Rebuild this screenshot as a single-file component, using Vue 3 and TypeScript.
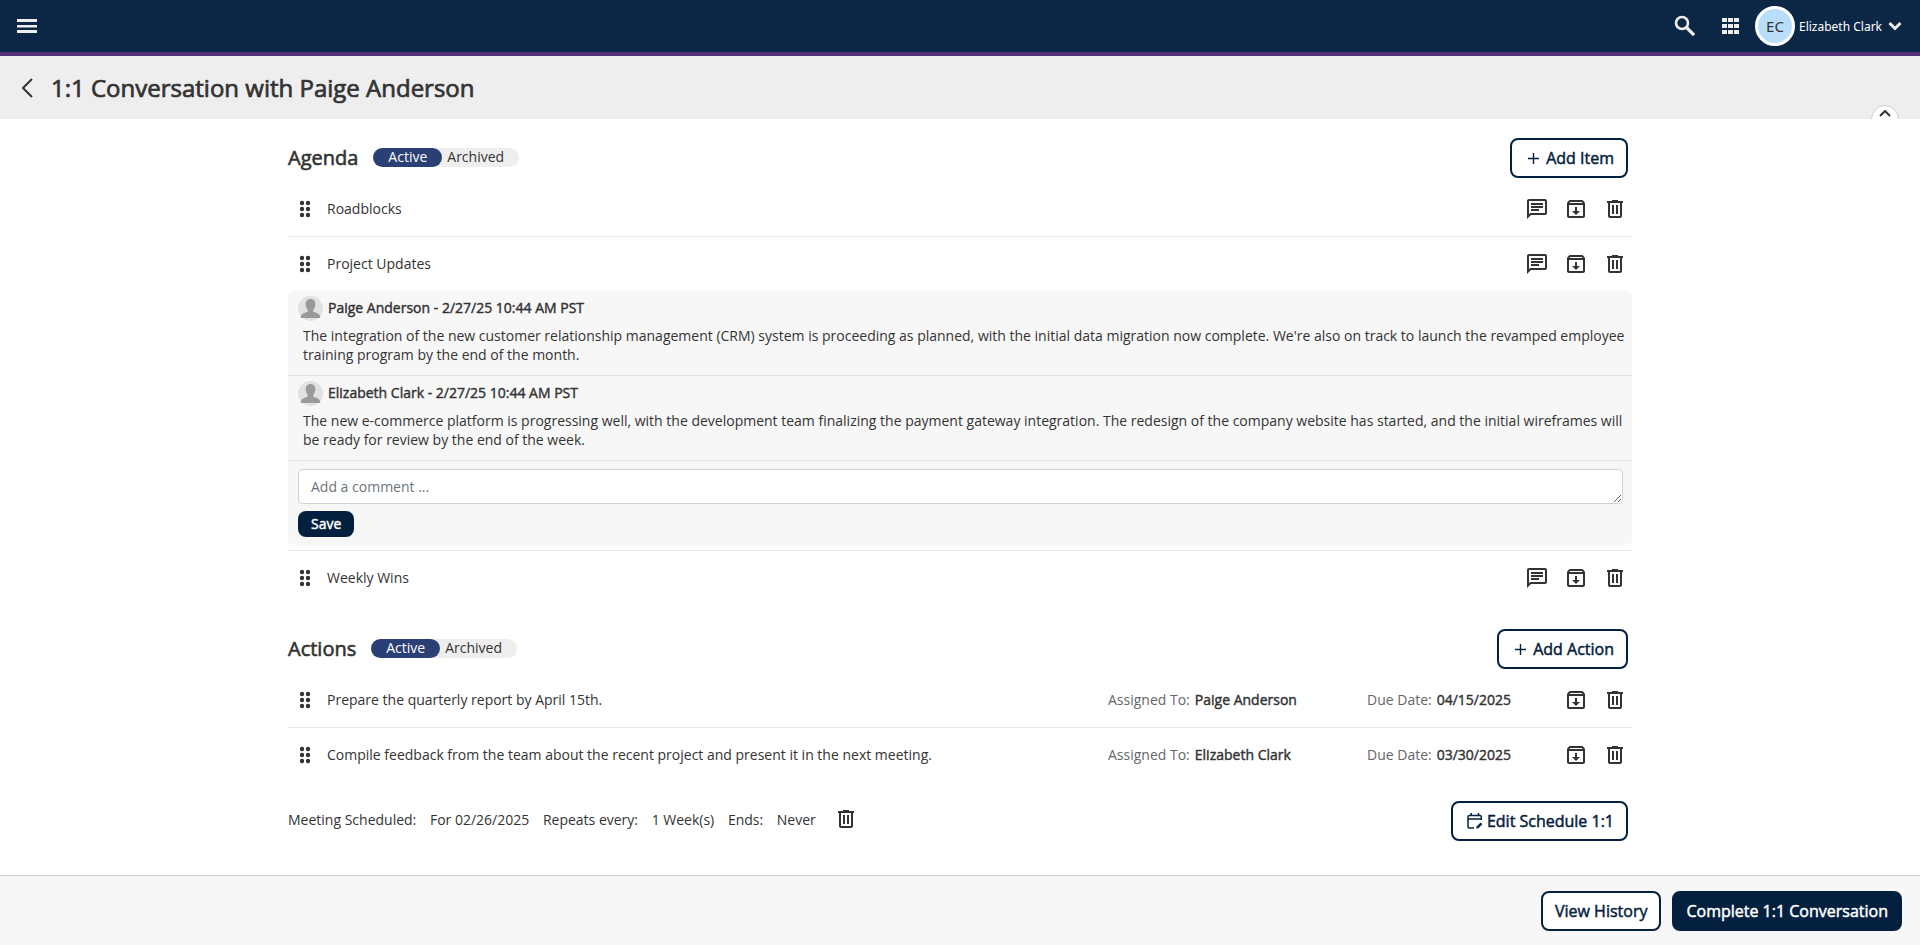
<script setup lang="ts">
import { ref } from 'vue'

interface AgendaComment {
  author: string
  stamp: string
  text: string
}
interface AgendaItem {
  title: string
  open: boolean
  comments: AgendaComment[]
}
interface ActionItem {
  title: string
  assignee: string
  due: string
}

const icons: Record<string, string> = {
  comment: 'M4 4h16v12H5.17L4 17.17V4m0-2c-1.1 0-1.99.9-1.99 2L2 22l4-4h14c1.1 0 2-.9 2-2V4c0-1.1-.9-2-2-2H4zm2 10h8v2H6v-2zm0-3h12v2H6V9zm0-3h12v2H6V6z',
  archive: 'M20.54 5.23l-1.39-1.68C18.88 3.21 18.47 3 18 3H6c-.47 0-.88.21-1.16.55L3.46 5.23C3.17 5.57 3 6.02 3 6.5V19c0 1.1.9 2 2 2h14c1.1 0 2-.9 2-2V6.5c0-.48-.17-.93-.46-1.27zM6.24 5h11.52l.83 1H5.42l.82-1zM5 19V8h14v11H5zm8-9h-2v4H8l4 4 4-4h-3v-4z',
  trash: 'M9 3v1H4v2h1v13c0 1.1.9 2 2 2h10c1.1 0 2-.9 2-2V6h1V4h-5V3H9zM7 6h10v13H7V6zm2 2v9h2V8H9zm4 0v9h2V8h-2z',
}

const agenda = ref<AgendaItem[]>([
  { title: 'Roadblocks', open: false, comments: [] },
  {
    title: 'Project Updates',
    open: true,
    comments: [
      {
        author: 'Paige Anderson',
        stamp: '2/27/25 10:44 AM PST',
        text: "The integration of the new customer relationship management (CRM) system is proceeding as planned, with the initial data migration now complete. We're also on track to launch the revamped employee training program by the end of the month.",
      },
      {
        author: 'Elizabeth Clark',
        stamp: '2/27/25 10:44 AM PST',
        text: 'The new e-commerce platform is progressing well, with the development team finalizing the payment gateway integration. The redesign of the company website has started, and the initial wireframes will be ready for review by the end of the week.',
      },
    ],
  },
  { title: 'Weekly Wins', open: false, comments: [] },
])

const actions: ActionItem[] = [
  { title: 'Prepare the quarterly report by April 15th.', assignee: 'Paige Anderson', due: '04/15/2025' },
  {
    title: 'Compile feedback from the team about the recent project and present it in the next meeting.',
    assignee: 'Elizabeth Clark',
    due: '03/30/2025',
  },
]

const agendaArchived = ref(false)
const actionsArchived = ref(false)
const draft = ref('')
</script>

<template>
  <div class="page">
    <header class="topbar">
      <button class="plain menu" aria-label="Menu">
        <svg width="22" height="16" viewBox="0 0 22 16"><path d="M1 1h20v3H1zM1 7h20v2.500H1zM1 12h20v3H1z" fill="#eee" /></svg>
      </button>
      <div class="top-right">
        <button class="plain search" aria-label="Search">
          <svg width="22" height="22" viewBox="0 0 22 22" fill="none" stroke="#eee">
            <circle cx="8" cy="8" r="6" stroke-width="2.6" /><path d="M12.5 12.5l7.6 7.6" stroke-width="3.2" />
          </svg>
        </button>
        <button class="plain apps" aria-label="Apps">
          <svg width="17" height="16" viewBox="0 0 17 16" fill="#eee">
            <path d="M0 0h5v4H0zM6 0h5v4H6zM12 0h5v4h-5zM0 6h5v4H0zM6 6h5v4H6zM12 6h5v4h-5zM0 12h5v4H0zM6 12h5v4H6zM12 12h5v4h-5z" />
          </svg>
        </button>
        <button class="plain account">
          <span class="initials">EC</span>
          <span class="user">Elizabeth Clark</span>
          <svg width="14" height="10" viewBox="0 0 14 10"><path d="M1.5 2l5.5 5.5L12.5 2" fill="none" stroke="#eee" stroke-width="3" /></svg>
        </button>
      </div>
    </header>

    <div class="titlebar">
      <a class="back" href="#" aria-label="Back">
        <svg width="12" height="20" viewBox="0 0 12 20"><path d="M11 1L2 10l9 9" fill="none" stroke="#333" stroke-width="2" /></svg>
      </a>
      <h1 class="strong">1:1 Conversation with Paige Anderson</h1>
      <button class="collapse" aria-label="Collapse header">
        <svg width="12" height="7" viewBox="0 0 12 7"><path d="M1 6l5-5 5 5" fill="none" stroke="#333" stroke-width="2" /></svg>
      </button>
    </div>

    <main>
      <section class="agenda">
        <div class="section-head">
          <h2 class="strong">Agenda</h2>
          <div class="toggle">
            <button :class="{ on: !agendaArchived }" @click="agendaArchived = false">Active</button>
            <button :class="{ on: agendaArchived }" @click="agendaArchived = true">Archived</button>
          </div>
          <button class="btn outline strong push">
            <svg class="plus" width="11" height="11" viewBox="0 0 11 11"><path d="M5.5 0v11M0 5.5h11" stroke="#03213f" stroke-width="1.4" /></svg>
            Add Item
          </button>
        </div>
        <ul class="items">
          <li v-for="item in agenda" :key="item.title">
            <div class="row">
              <span class="grip">
                <svg width="12" height="18" viewBox="0 0 12 18" fill="#333">
                  <circle cx="3" cy="3" r="2.2" /><circle cx="9" cy="3" r="2.2" /><circle cx="3" cy="9" r="2.2" />
                  <circle cx="9" cy="9" r="2.2" /><circle cx="3" cy="15" r="2.2" /><circle cx="9" cy="15" r="2.2" />
                </svg>
              </span>
              <span class="name">{{ item.title }}</span>
              <div class="tools">
                <button class="plain" aria-label="Comments" @click="item.open = !item.open">
                  <svg width="24" height="24" viewBox="0 0 24 24"><path :d="icons.comment" fill="#333" /></svg>
                </button>
                <button class="plain" aria-label="Archive">
                  <svg width="24" height="24" viewBox="0 0 24 24"><path :d="icons.archive" fill="#333" /></svg>
                </button>
                <button class="plain" aria-label="Delete">
                  <svg width="24" height="24" viewBox="0 0 24 24"><path :d="icons.trash" fill="#333" /></svg>
                </button>
              </div>
            </div>
            <div v-if="item.open" class="thread">
              <article v-for="c in item.comments" :key="c.author">
                <div class="byline">
                  <svg width="25" height="25" viewBox="0 0 25 25">
                    <circle cx="12.5" cy="12.5" r="12.5" fill="#e1e1e1" />
                    <path d="M12.500 3c3 0 4.800 2.200 4.800 5.200 0 2.200-.8 4.400-2 5.600v1.800c1.200 1.300 6.900 1.500 6.900 5.500v.4c0 .3-.2.500-.5.500h-18.400c-.3 0-.5-.2-.5-.5v-.4c0-4 5.700-4.200 6.900-5.500v-1.800c-1.200-1.200-2-3.400-2-5.600 0-3 1.800-5.200 4.800-5.200z" fill="#999" />
                  </svg>
                  <span class="strong">{{ c.author }} - {{ c.stamp }}</span>
                </div>
                <p>{{ c.text }}</p>
              </article>
              <form class="reply" @submit.prevent>
                <textarea v-model="draft" rows="1" placeholder="Add a comment ..." aria-label="Add a comment"></textarea>
                <button class="save strong" type="submit">Save</button>
              </form>
            </div>
          </li>
        </ul>
      </section>

      <section class="actions">
        <div class="section-head">
          <h2 class="strong">Actions</h2>
          <div class="toggle">
            <button :class="{ on: !actionsArchived }" @click="actionsArchived = false">Active</button>
            <button :class="{ on: actionsArchived }" @click="actionsArchived = true">Archived</button>
          </div>
          <button class="btn outline strong push">
            <svg class="plus" width="11" height="11" viewBox="0 0 11 11"><path d="M5.5 0v11M0 5.5h11" stroke="#03213f" stroke-width="1.4" /></svg>
            Add Action
          </button>
        </div>
        <ul class="items">
          <li v-for="item in actions" :key="item.title">
            <div class="row">
              <span class="grip">
                <svg width="12" height="18" viewBox="0 0 12 18" fill="#333">
                  <circle cx="3" cy="3" r="2.2" /><circle cx="9" cy="3" r="2.2" /><circle cx="3" cy="9" r="2.2" />
                  <circle cx="9" cy="9" r="2.2" /><circle cx="3" cy="15" r="2.2" /><circle cx="9" cy="15" r="2.2" />
                </svg>
              </span>
              <span class="name">{{ item.title }}</span>
              <span class="fact assignee"><span class="label">Assigned To:</span><span class="strong">{{ item.assignee }}</span></span>
              <span class="fact due"><span class="label">Due Date:</span><span class="strong">{{ item.due }}</span></span>
              <div class="tools">
                <button class="plain" aria-label="Archive">
                  <svg width="24" height="24" viewBox="0 0 24 24"><path :d="icons.archive" fill="#333" /></svg>
                </button>
                <button class="plain" aria-label="Delete">
                  <svg width="24" height="24" viewBox="0 0 24 24"><path :d="icons.trash" fill="#333" /></svg>
                </button>
              </div>
            </div>
          </li>
        </ul>
      </section>

      <section class="schedule">
        <p class="summary">
          <span>Meeting Scheduled:</span>
          <span> For 02/26/2025</span>
          <span> Repeats every:</span>
          <span> 1 Week(s)</span>
          <span> Ends:</span>
          <span> Never</span>
        </p>
        <button class="plain cancel" aria-label="Delete schedule">
          <svg width="24" height="24" viewBox="0 0 24 24"><path :d="icons.trash" fill="#333" /></svg>
        </button>
        <button class="btn outline strong push edit">
          <svg width="16" height="16" viewBox="0 0 16 16" fill="none" stroke="#03213f" stroke-width="1.5">
            <path d="M7 15H2.500Q1 15 1 13.500V4Q1 2.500 2.500 2.500h10.500Q14.300 2.500 14.300 4v3M1 6h13.300M4.200 0v3M11.500 0v3" />
            <path d="M9.200 15.600l.4-2.200 4-4 1.800 1.800-4 4z" fill="#03213f" stroke="none" />
          </svg>
          Edit Schedule 1:1
        </button>
      </section>
    </main>

    <footer>
      <button class="btn outline strong">View History</button>
      <button class="btn solid strong">Complete 1:1 Conversation</button>
    </footer>
  </div>
</template>

<style>
body {
  margin: 0;
}
</style>

<style scoped>
* {
  box-sizing: border-box;
}
.page {
  display: flex;
  flex-direction: column;
  min-height: 100vh;
  background: #fff;
  color: #333;
  font: 14px/19px "Open Sans", "Noto Sans", sans-serif;
}
svg {
  display: block;
  flex: none;
}
button,
textarea {
  font: inherit;
  color: inherit;
}
button {
  cursor: pointer;
}
h1,
h2,
p,
ul {
  margin: 0;
  padding: 0;
}
.strong {
  font-weight: 400;
  -webkit-text-stroke: 0.03em currentColor;
}
.plain {
  display: flex;
  align-items: center;
  padding: 0;
  border: 0;
  background: none;
}
.topbar {
  display: flex;
  align-items: center;
  justify-content: space-between;
  height: 56px;
  padding: 0 18px 0 16px;
  border-bottom: 4px solid #563078;
  background: #0c2646;
}
.top-right {
  display: flex;
  align-items: center;
}
.apps {
  margin: 0 16px 0 26px;
}
.account {
  gap: 4px;
  color: #fff;
  font: 12px/18px "Segoe UI", "Noto Sans", sans-serif;
}
.account svg {
  margin-left: 2px;
}
.user {
  padding-top: 2px;
}
.initials {
  display: grid;
  place-items: center;
  width: 40px;
  height: 40px;
  border: 3px solid #fff;
  border-radius: 50%;
  background: #b9defb;
  color: #333;
  font-size: 15px;
}
.titlebar {
  position: relative;
  display: flex;
  align-items: center;
  gap: 18px;
  height: 63px;
  padding-left: 21px;
  overflow: hidden;
  background: #eee;
}
h1 {
  font-size: 24px;
  line-height: 32px;
}
.collapse {
  position: absolute;
  right: 21px;
  bottom: -14px;
  display: flex;
  justify-content: center;
  width: 28px;
  height: 28px;
  padding: 4px 0 0;
  border: 1px solid #ccc;
  border-radius: 50%;
  background: #fff;
}
main {
  flex: 1;
  width: 70%;
  margin: 0 auto;
  padding: 19px 0 33px;
}
.section-head {
  display: flex;
  align-items: center;
  padding-right: 4px;
}
h2 {
  font-size: 20px;
  line-height: 28px;
}
.toggle {
  display: flex;
  margin: 0 0 1px 15px;
  border-radius: 10px;
  background: #eee;
}
.toggle button {
  height: 19px;
  padding: 0 15px 1px 5px;
  border: 0;
  border-radius: 10px;
  background: none;
  line-height: 18px;
}
.toggle .on {
  padding: 0 15px 1px;
  background: #2a3f73;
  color: #fff;
}
.push {
  margin-left: auto;
}
.btn {
  display: flex;
  align-items: center;
  height: 40px;
  padding: 0 12px;
  border: 2px solid #03213f;
  border-radius: 8px;
  font-size: 16px;
  line-height: 22px;
}
.outline {
  background: #fff;
  color: #03213f;
}
.solid {
  background: #03213f;
  color: #fff;
}
.plus {
  margin: 1px 7px 0 4px;
}
.btn.edit {
  gap: 4px;
  padding-left: 14px;
}
.items {
  list-style: none;
}
.items li + li {
  border-top: 1px solid #e9e9e9;
}
.row {
  display: flex;
  align-items: center;
  height: 54px;
}
.items li:first-child .row {
  height: 58px;
  padding-top: 4px;
}
.grip {
  display: flex;
  width: 39px;
  padding-left: 11px;
}
.name {
  flex: 1;
  padding-bottom: 2px;
}
.tools {
  display: flex;
  gap: 15px;
  padding-right: 5px;
}
.label {
  color: #666;
}
.fact {
  display: flex;
  gap: 5px;
  padding-bottom: 2px;
}
.assignee {
  width: 259px;
}
.due {
  width: 197px;
}
.thread {
  margin-bottom: 5px;
  border-radius: 5px;
  background: #f7f7f7;
}
article {
  padding: 5px 0 11px 10px;
  border-bottom: 1px solid #e1e1e1;
}
.byline {
  display: flex;
  align-items: center;
  gap: 5px;
}
.byline span {
  padding-bottom: 2px;
}
article p {
  padding: 5px 5px 0;
}
.reply {
  padding: 8px 9px 8px 10px;
}
textarea {
  display: block;
  width: 100%;
  height: 35px;
  padding: 7px 12px;
  border: 1px solid #ced4da;
  border-radius: 4px;
  background: #fff;
}
textarea::placeholder {
  color: #6c757d;
}
.save {
  display: block;
  height: 26px;
  margin-top: 7px;
  padding: 0 13px 1px;
  border: 0;
  border-radius: 8px;
  background: #03213f;
  color: #fff;
}
.actions {
  padding-top: 24px;
}
.schedule {
  display: flex;
  align-items: center;
  margin-top: 19px;
  padding-right: 4px;
}
.summary {
  padding-bottom: 3px;
}
.summary span {
  margin-right: 10px;
}
.cancel {
  margin-left: 8px;
  padding-bottom: 5px;
}
footer {
  display: flex;
  align-items: center;
  justify-content: flex-end;
  gap: 11px;
  height: 70px;
  padding-right: 18px;
  border-top: 1px solid #ccc;
  background: #f7f7f7;
}
</style>
